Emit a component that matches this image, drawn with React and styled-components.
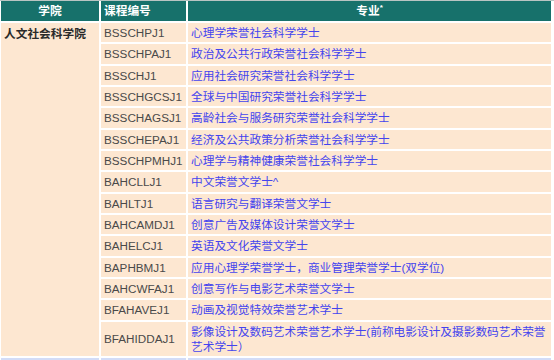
import React from 'react';
import styled, { createGlobalStyle } from 'styled-components';

const GlobalStyle = createGlobalStyle`
  html, body {
    margin: 0;
    padding: 0;
    background: #ffffff;
  }
  body {
    font-family: "Liberation Sans", Arial, "Noto Sans CJK SC", sans-serif;
    font-size: 11.7px;
    overflow: hidden;
  }
`;

const Wrapper = styled.div`
  width: 554px;
  height: 360px;
  overflow: hidden;
  border-top: 1px solid #b9c4c2;
  box-sizing: border-box;
`;

const Table = styled.table`
  width: 554px;
  margin: -2px 0 0 -1px;
  border-collapse: separate;
  border-spacing: 2px;
  table-layout: fixed;
`;

const HeadCell = styled.th`
  background: #17716b;
  color: #ffffff;
  font-weight: bold;
  font-size: 11.7px;
  line-height: 16px;
  padding: 2px 3px;
  text-align: ${(p) => p.$align || 'center'};
  white-space: nowrap;
`;

const Cell = styled.td`
  background: ${(p) => p.$bg || '#fde7d1'};
  padding: 2px 3px;
  line-height: 15.33px;
  height: 15.33px;
  font-size: 11.7px;
  vertical-align: middle;
`;

const FacultyCell = styled(Cell)`
  vertical-align: top;
  font-weight: bold;
  color: #2a2a2a;
  padding-top: 3px;
`;

const CodeCell = styled(Cell)`
  color: #4a4a4a;
`;

const ProgramLink = styled.a`
  color: #4444ee;
  text-decoration: none;
`;

const Mark = styled.sup`
  font-size: 8px;
  vertical-align: top;
  line-height: 10px;
`;

const programmes = [
  ['BSSCHPJ1', '心理学荣誉社会科学学士'],
  ['BSSCHPAJ1', '政治及公共行政荣誉社会科学学士'],
  ['BSSCHJ1', '应用社会研究荣誉社会科学学士'],
  ['BSSCHGCSJ1', '全球与中国研究荣誉社会科学学士'],
  ['BSSCHAGSJ1', '高龄社会与服务研究荣誉社会科学学士'],
  ['BSSCHEPAJ1', '经济及公共政策分析荣誉社会科学学士'],
  ['BSSCHPMHJ1', '心理学与精神健康荣誉社会科学学士'],
  ['BAHCLLJ1', '中文荣誉文学士^'],
  ['BAHLTJ1', '语言研究与翻译荣誉文学士'],
  ['BAHCAMDJ1', '创意广告及媒体设计荣誉文学士'],
  ['BAHELCJ1', '英语及文化荣誉文学士'],
  ['BAPHBMJ1', '应用心理学荣誉学士，商业管理荣誉学士(双学位)'],
  ['BAHCWFAJ1', '创意写作与电影艺术荣誉文学士'],
  ['BFAHAVEJ1', '动画及视觉特效荣誉艺术学士'],
  ['BFAHIDDAJ1', '影像设计及数码艺术荣誉艺术学士(前称电影设计及摄影数码艺术荣誉艺术学士）'],
];

function App() {
  return (
    <Wrapper>
      <GlobalStyle />
      <Table>
        <colgroup>
          <col style={{ width: 98 }} />
          <col style={{ width: 85 }} />
          <col />
        </colgroup>
        <thead>
          <tr>
            <HeadCell>学院</HeadCell>
            <HeadCell $align="left">课程编号</HeadCell>
            <HeadCell>
              专业<Mark>*</Mark>
            </HeadCell>
          </tr>
        </thead>
        <tbody>
          {programmes.map(([code, name], i) => (
            <tr key={code}>
              {i === 0 && (
                <FacultyCell rowSpan={programmes.length}>人文社会科学院</FacultyCell>
              )}
              <CodeCell>{code}</CodeCell>
              <Cell>
                <ProgramLink href="#">{name}</ProgramLink>
              </Cell>
            </tr>
          ))}
          <tr>
            <FacultyCell $bg="#d3dcf7" />
            <CodeCell $bg="#d3dcf7" />
            <Cell $bg="#d3dcf7" />
          </tr>
        </tbody>
      </Table>
    </Wrapper>
  );
}

export default App;
